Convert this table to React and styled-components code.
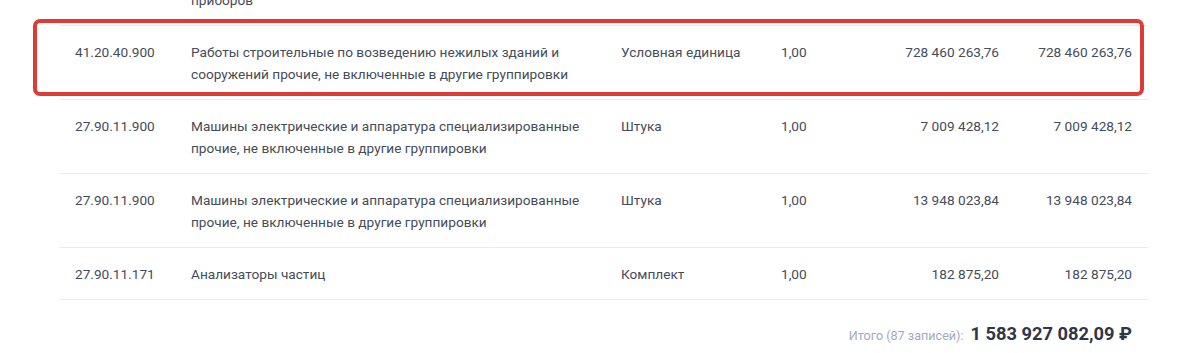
import styled, { createGlobalStyle } from 'styled-components'

const GlobalStyle = createGlobalStyle`
    html, body {
        margin: 0;
        padding: 0;
        background: #ffffff;
        overflow: hidden;
    }
    body {
        font-family: Roboto, 'Liberation Sans', sans-serif;
        color: #454c5a;
    }
`

const Page = styled.div`
    width: 1200px;
    height: 353px;
    overflow: hidden;
`

const Scroller = styled.div`
    margin-top: -48px;
    padding: 0 52px 0 59px;
`

const Table = styled.div`
    display: flex;
    flex-direction: column;
`

const Row = styled.div`
    position: relative;
    display: grid;
    grid-template-columns: 132px 430px 160px 80px 154px 133px;
    border-bottom: 1px solid #e9ecf0;
    font-size: 13.65px;
    line-height: 22px;
    &::after {
        content: '';
        display: ${({ $highlight }) => ($highlight ? 'block' : 'none')};
        position: absolute;
        left: -26px;
        right: 4px;
        top: -7px;
        bottom: 3px;
        border: 4px solid #de3b34;
        border-radius: 7px;
        pointer-events: none;
    }
`

const Cell = styled.div`
    padding: 15px 16px 14px ${({ $first }) => ($first ? '16px' : '0')};
    text-align: ${({ $align }) => $align || 'left'};
    padding-right: ${({ $align }) => ($align === 'right' ? '16px' : '10px')};
`

const Description = styled(Cell)`
    padding-right: 22px;
    white-space: pre-line;
`

const Footer = styled.div`
    display: flex;
    justify-content: flex-end;
    align-items: baseline;
    gap: 7px;
    padding: 23px 16px 0 0;
`

const TotalLabel = styled.span`
    font-size: 12.6px;
    color: #a3abbb;
`

const TotalValue = styled.span`
    font-size: 18.3px;
    font-weight: 700;
    color: #2f3647;
`

const rows = [
    {
        code: '26.51.66.190',
        name: 'Инструменты и приборы для измерения и контроля\nприборов',
        unit: 'Штука',
        qty: '1,00',
        price: '1 250 000,00',
        sum: '1 250 000,00',
    },
    {
        code: '41.20.40.900',
        name: 'Работы строительные по возведению нежилых зданий и сооружений прочие, не включенные в другие группировки',
        unit: 'Условная единица',
        qty: '1,00',
        price: '728 460 263,76',
        sum: '728 460 263,76',
        highlight: true,
    },
    {
        code: '27.90.11.900',
        name: 'Машины электрические и аппаратура специализированные прочие, не включенные в другие группировки',
        unit: 'Штука',
        qty: '1,00',
        price: '7 009 428,12',
        sum: '7 009 428,12',
    },
    {
        code: '27.90.11.900',
        name: 'Машины электрические и аппаратура специализированные прочие, не включенные в другие группировки',
        unit: 'Штука',
        qty: '1,00',
        price: '13 948 023,84',
        sum: '13 948 023,84',
    },
    {
        code: '27.90.11.171',
        name: 'Анализаторы частиц',
        unit: 'Комплект',
        qty: '1,00',
        price: '182 875,20',
        sum: '182 875,20',
    },
]

function App() {
    return (
        <Page>
            <GlobalStyle />
            <Scroller>
                <Table>
                    {rows.map((row, i) => (
                        <Row key={i} $highlight={row.highlight}>
                            <Cell $first>{row.code}</Cell>
                            <Description>{row.name}</Description>
                            <Cell>{row.unit}</Cell>
                            <Cell>{row.qty}</Cell>
                            <Cell $align="right">{row.price}</Cell>
                            <Cell $align="right">{row.sum}</Cell>
                        </Row>
                    ))}
                </Table>
                <Footer>
                    <TotalLabel>Итого (87 записей):</TotalLabel>
                    <TotalValue>1 583 927 082,09 ₽</TotalValue>
                </Footer>
            </Scroller>
        </Page>
    )
}

export default App
